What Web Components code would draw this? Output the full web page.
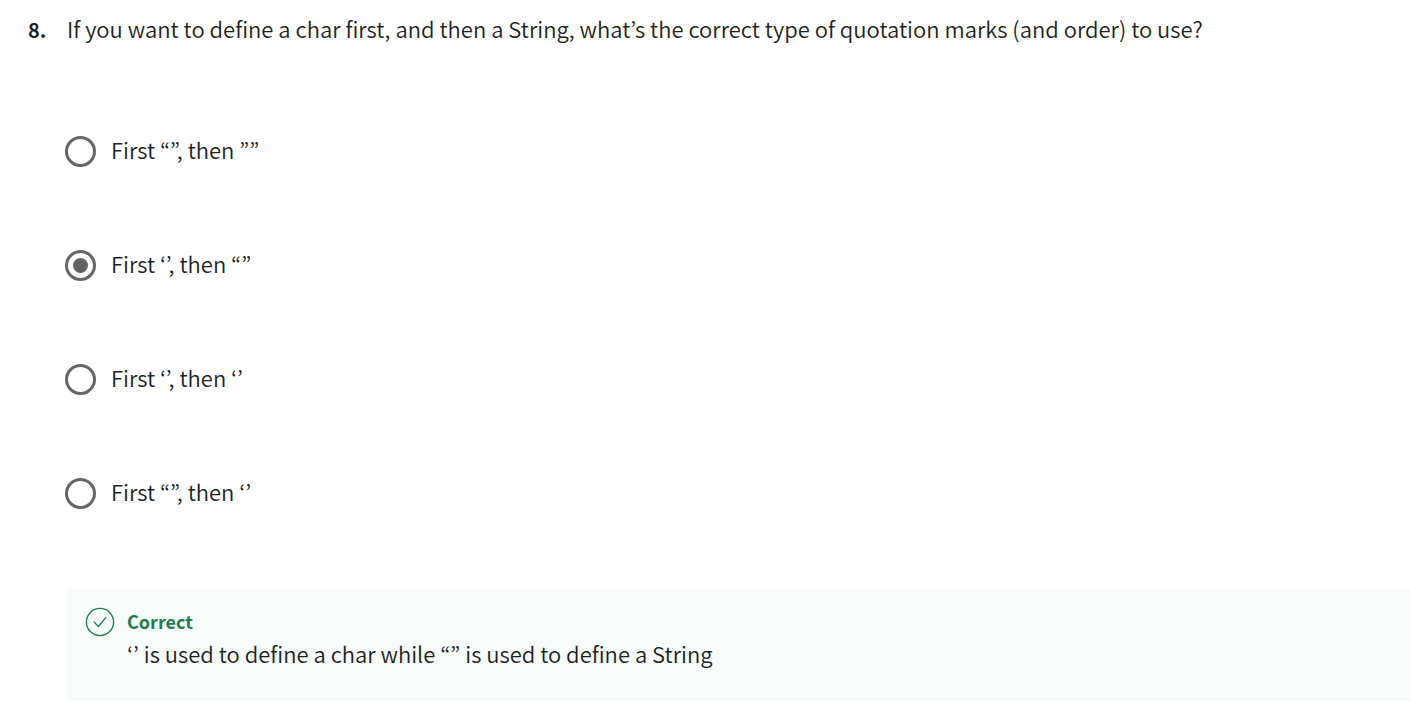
<!DOCTYPE html>
<html lang="en">
<head>
<meta charset="utf-8">
<meta name="viewport" content="width=device-width, initial-scale=1">
<title>Quiz question</title>
<style>
body { margin: 0; background: #fff; color: #1f1f1f; font: 350 22px/32px "Noto Sans CJK KR DemiLight", "Noto Sans CJK KR", "Open Sans", sans-serif; }
</style>
</head>
<body>
<quiz-question number="8.">
  <span slot="prompt">If you want to define a char first, and then a String, what’s the correct type of quotation marks (and order) to use?</span>
  <quiz-options></quiz-options>
  <quiz-feedback heading="Correct">‘’ is used to define a char while “” is used to define a String</quiz-feedback>
</quiz-question>
<script>
class QuizQuestion extends HTMLElement {
  constructor() {
    super();
    this.attachShadow({ mode: "open" }).innerHTML = `
      <style>
        :host { display: grid; grid-template-columns: 39px minmax(0, 1fr); align-items: baseline; padding: 12px 0 0 28px; }
        .number { font: 700 20px/32px "Noto Sans CJK KR", "Open Sans", sans-serif; }
        .body { grid-column: 2; }
      </style>
      <div class="number"></div>
      <div><slot name="prompt"></slot></div>
      <div class="body"><slot></slot></div>`;
    this.shadowRoot.querySelector(".number").textContent = this.getAttribute("number");
  }
}

class QuizOptions extends HTMLElement {
  constructor() {
    super();
    const options = ["First “”, then ””", "First ‘’, then “”", "First ‘’, then ‘’", "First “”, then ‘’"];
    this.attachShadow({ mode: "open" }).innerHTML = `
      <style>
        :host { display: block; padding: 90px 0 80px; }
        fieldset { display: grid; gap: 83px; margin: 0; padding: 0; border: 0; min-width: 0; }
        label { display: flex; align-items: flex-start; gap: 15px; margin-left: -2px; line-height: 26px; }
        input { appearance: none; flex: none; display: grid; place-items: center; box-sizing: border-box;
          width: 31px; height: 31px; margin: 0; border: 3px solid #666; border-radius: 50%; }
        input:checked::before { content: ""; width: 15px; height: 15px; border-radius: 50%; background: #636363; }
      </style>
      <fieldset aria-label="Answers">
        ${options.map((text, i) => `<label><input type="radio" name="answer" value="${i}" ${i === 1 ? "checked" : ""}><span>${text}</span></label>`).join("")}
      </fieldset>`;
  }
}

class QuizFeedback extends HTMLElement {
  constructor() {
    super();
    this.attachShadow({ mode: "open" }).innerHTML = `
      <style>
        :host { display: grid; grid-template-columns: 30px minmax(0, 1fr); column-gap: 12px; box-sizing: border-box;
          padding: 16px 18px 32px; background: #f7fbf9; }
        svg { width: 30px; height: 30px; margin-top: 2px; }
        strong { display: block; color: #1d7c50; font: 700 18px/32px "Noto Sans CJK KR", "Open Sans", sans-serif; }
      </style>
      <svg viewBox="0 0 30 30" fill="none" stroke="#1d8354" aria-hidden="true">
        <circle cx="15" cy="15" r="13.6" stroke-width="1.4"/>
        <path d="M8.8 14.8 13.4 19.4 21 10.4" stroke-width="1.4"/>
      </svg>
      <div><strong></strong><slot></slot></div>`;
    this.shadowRoot.querySelector("strong").textContent = this.getAttribute("heading");
  }
}

customElements.define("quiz-question", QuizQuestion);
customElements.define("quiz-options", QuizOptions);
customElements.define("quiz-feedback", QuizFeedback);
</script>
</body>
</html>
